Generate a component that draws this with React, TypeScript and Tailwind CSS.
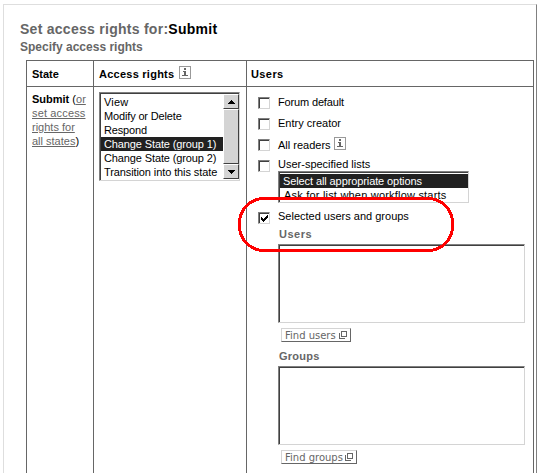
import type { ReactNode } from "react";

const states = [
  { label: "View", track: "tracking-[0.2px]" },
  { label: "Modify or Delete", track: "tracking-[-0.15px]" },
  { label: "Respond", track: "tracking-[-0.15px]" },
  { label: "Change State (group 1)", track: "tracking-[-0.12px]", selected: true },
  { label: "Change State (group 2)", track: "tracking-[-0.12px]" },
  { label: "Transition into this state", track: "tracking-[-0.1px]" },
];

function InfoIcon() {
  return (
    <svg width="12" height="13" viewBox="0 0 12 13" className="shrink-0" shapeRendering="crispEdges">
      <rect x="0.5" y="0.5" width="11" height="12" fill="#fff" stroke="#999" />
      <path d="M5 2h2v2H5zM4 5h3v4h2v1H3V9h2V6H4z" fill="#666" />
    </svg>
  );
}

function PopupIcon() {
  return (
    <svg width="9" height="8" viewBox="0 0 9 8" className="shrink-0" shapeRendering="crispEdges">
      <path d="M2.5 0.5h5v5h-5zM0.5 2v5.5H6" fill="none" stroke="#666" />
    </svg>
  );
}

function Sunken({ className, children }: { className: string; children?: ReactNode }) {
  return (
    <div className={`border border-t-[#808080] border-l-[#808080] border-r-[#d4d4d4] border-b-[#d4d4d4] bg-white ${className}`}>
      <div className="flex h-full border-t border-l border-[#404040]">{children}</div>
    </div>
  );
}

function Check({ checked = false }: { checked?: boolean }) {
  return (
    <Sunken className="size-3 shrink-0">
      {checked && (
        <svg width="9" height="9" viewBox="0 0 9 9" shapeRendering="crispEdges">
          <path d="M1 3h1v1h1v1h1V4h1V3h1V2h1V1h1v3H7v1H6v1H5v1H4v1H3V7H2V6H1z" fill="#000" />
        </svg>
      )}
    </Sunken>
  );
}

function Option({ className, label, labelClass, checked, info }: { className: string; label: string; labelClass: string; checked?: boolean; info?: boolean }) {
  return (
    <div className={`flex items-start ${className}`}>
      <Check checked={checked} />
      <span className={`ml-2 whitespace-nowrap ${labelClass}`}>{label}</span>
      {info && <span className="ml-[3px] -mt-[2px]"><InfoIcon /></span>}
    </div>
  );
}

function ScrollButton({ up = false }: { up?: boolean }) {
  return (
    <div className="flex h-[15px] w-4 shrink-0 items-center justify-center border border-t-white border-l-white border-r-[#404040] border-b-[#404040] bg-[#d4d4d4]">
      <svg width="7" height="4" viewBox="0 0 7 4" shapeRendering="crispEdges">
        <path d={up ? "M3 0h1v1h1v1h1v1h1v1H0V3h1V2h1V1h1z" : "M0 0h7v1H6v1H5v1H4v1H3V3H2V2H1V1H0z"} />
      </svg>
    </div>
  );
}

function FindButton({ label, className }: { label: string; className: string }) {
  return (
    <button
      className={`ml-[34px] flex h-[14px] items-start justify-between border border-t-[#d4d4d4] border-l-[#d4d4d4] border-r-[#666] border-b-[#666] pr-[2px] pl-[3px] font-['DejaVu_Sans',sans-serif] text-[10px] leading-[12px] text-[#666] ${className}`}
    >
      <span className="mt-px whitespace-nowrap">{label}</span>
      <span className="mt-[2px] flex"><PopupIcon /></span>
    </button>
  );
}

export default function App() {
  return (
    <div className="h-[473px] w-[541px] overflow-hidden bg-white pt-1 pl-[3px] font-['Liberation_Sans',Arial,sans-serif] text-[11px] leading-[14px] text-black">
      <div className="h-[469px] w-[534px] border-t border-r border-l border-t-[#dedede] border-r-[#808080] border-l-[#dedede]">
        <h1 className="mt-[16px] ml-4 h-[18px] text-[14px] leading-[16px] font-bold tracking-[0.27px] whitespace-nowrap text-[#666]">
          Set access rights for:<span className="text-black">Submit</span>
        </h1>
        <h2 className="ml-4 h-[21px] pt-[1px] text-[12px] leading-[14px] font-bold text-[#666]">Specify access rights</h2>

        <div className="ml-[22px] h-[440px] w-[508px] border border-[#666]">
          <div className="grid h-[26px] grid-cols-[66px_153px_287px] border-b border-[#666] font-bold">
            <div className="pt-[6px] pl-[5px]">State</div>
            <div className="flex border-l border-[#666] pt-[5px] pl-[5px]">
              <span className="mt-px mr-[5px] tracking-[0.25px]">Access rights</span>
              <InfoIcon />
            </div>
            <div className="border-l border-[#666] pt-[6px] pl-1 tracking-[0.4px]">Users</div>
          </div>

          <div className="grid h-[412px] grid-cols-[66px_153px_287px]">
            <div className="pt-[5px] pl-[5px]">
              <b>Submit</b> (
              <span className="text-[#666] underline">
                or<br />
                <span className="tracking-[0.15px]">set access</span><br />rights for<br />all states
              </span>
              )
            </div>

            <div className="border-l border-[#666] pt-[5px] pl-[5px]">
              <Sunken className="h-[89px] w-[141px]">
                <div className="w-[122px] pt-px">
                  {states.map((s) => (
                    <div key={s.label} className={`h-[14px] pl-[3px] whitespace-nowrap ${s.track} ${s.selected ? "bg-[#212121] text-white" : ""}`}>
                      {s.label}
                    </div>
                  ))}
                </div>
                <div className="flex w-4 flex-col">
                  <ScrollButton up />
                  <div className="h-[55px] border border-t-white border-l-white border-r-[#404040] border-b-[#404040] bg-[#d4d4d4]" />
                  <ScrollButton />
                </div>
              </Sunken>
            </div>

            <div className="border-l border-[#666]">
              <div className="pt-[10px] pl-[11px]">
                <Option className="h-[21px]" label="Forum default" labelClass="-mt-[2px] tracking-[-0.15px]" />
                <Option className="h-[21px]" label="Entry creator" labelClass="-mt-[2px]" />
                <Option className="h-[21px]" label="All readers" labelClass="-mt-px" info />
                <Option className="h-[11px]" label="User-specified lists" labelClass="-mt-[3px]" />
              </div>
              <Sunken className="ml-[31px] h-[32px] w-[191px]">
                <div className="h-[29px] w-full overflow-hidden pt-px">
                  <div className="h-[14px] bg-[#212121] pl-[3px] tracking-[-0.1px] text-white">Select all appropriate options</div>
                  <div className="h-[14px] overflow-hidden pl-1 tracking-[0.2px]">Ask for list when workflow starts</div>
                </div>
              </Sunken>
              <div className="pt-[9px] pl-[11px]">
                <Option className="h-[15px]" label="Selected users and groups" labelClass="-mt-[3px]" checked />
              </div>
              <h3 className="ml-8 h-[17px] font-bold tracking-[0.5px] text-[#666]">Users</h3>
              <Sunken className="ml-[31px] h-[79px] w-[247px]" />
              <FindButton className="mt-[5px] w-[70px]" label="Find users" />
              <h3 className="mt-[7px] ml-8 h-[17px] font-bold tracking-[0.25px] text-[#666]">Groups</h3>
              <Sunken className="ml-[31px] h-[79px] w-[247px]" />
              <FindButton className="mt-[5px] w-[76px]" label="Find groups" />
            </div>
          </div>
        </div>
      </div>
      <svg className="pointer-events-none absolute top-[197px] left-[238px]" width="216" height="55" viewBox="0 0 216 55" shapeRendering="crispEdges">
        <rect x="1.5" y="1.5" width="213" height="52" rx="24.5" fill="none" stroke="#f00" strokeWidth="3" />
      </svg>
    </div>
  );
}
